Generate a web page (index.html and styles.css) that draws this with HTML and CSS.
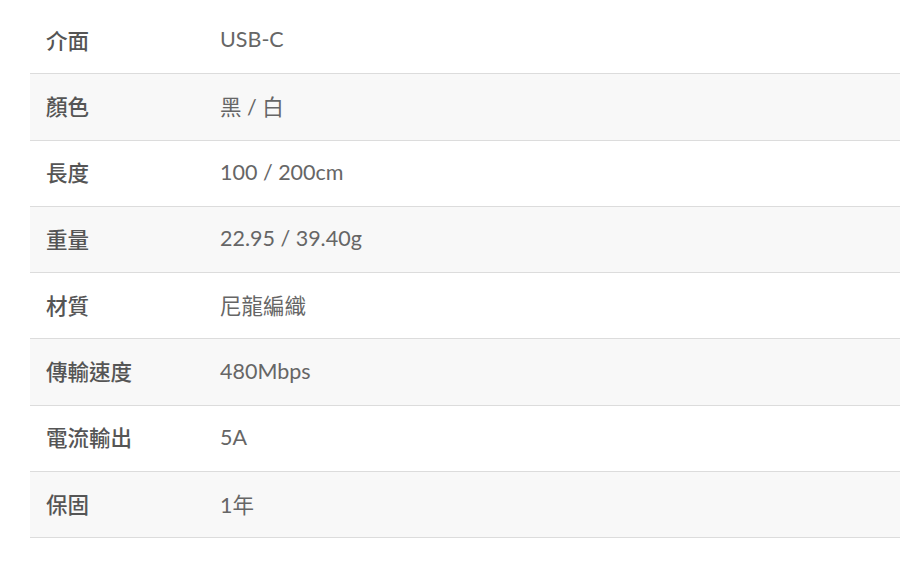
FILE: index.html
```html
<!DOCTYPE html>
<html lang="zh-Hant">

<head>
    <meta charset="UTF-8">
    <meta name="viewport" content="width=device-width, initial-scale=1.0">
    <title>規格</title>
    <link rel="stylesheet" href="styles.css">
</head>

<body>
    <div class="spec">
        <div class="spec__row">
            <div class="spec__label">介面</div>
            <div class="spec__value">USB-C</div>
        </div>
        <div class="spec__row">
            <div class="spec__label">顏色</div>
            <div class="spec__value">黑 / 白</div>
        </div>
        <div class="spec__row">
            <div class="spec__label">長度</div>
            <div class="spec__value">100 / 200cm</div>
        </div>
        <div class="spec__row">
            <div class="spec__label">重量</div>
            <div class="spec__value">22.95 / 39.40g</div>
        </div>
        <div class="spec__row">
            <div class="spec__label">材質</div>
            <div class="spec__value">尼龍編織</div>
        </div>
        <div class="spec__row">
            <div class="spec__label">傳輸速度</div>
            <div class="spec__value">480Mbps</div>
        </div>
        <div class="spec__row">
            <div class="spec__label">電流輸出</div>
            <div class="spec__value">5A</div>
        </div>
        <div class="spec__row">
            <div class="spec__label">保固</div>
            <div class="spec__value">1年</div>
        </div>
    </div>
</body>

</html>
```

FILE: styles.css
```css
* {
    margin: 0;
    padding: 0;
    box-sizing: border-box;
}

body {
    background: #fff;
    font-family: Lato, "Noto Sans CJK TC", sans-serif;
    font-size: 21.5px;
    padding: 8px 0 0 30px;
}

.spec {
    width: 870px;
}

.spec__row {
    display: flex;
    align-items: center;
    height: 66.3px;
    padding-bottom: 3px;
    border-bottom: 1px solid #dcdcdc;
}

.spec__row:nth-child(even) {
    background-color: #f8f8f8;
}

.spec__label {
    width: 190px;
    padding-left: 16px;
    font-weight: 500;
    color: #555;
}

.spec__value {
    color: #666;
}
```
